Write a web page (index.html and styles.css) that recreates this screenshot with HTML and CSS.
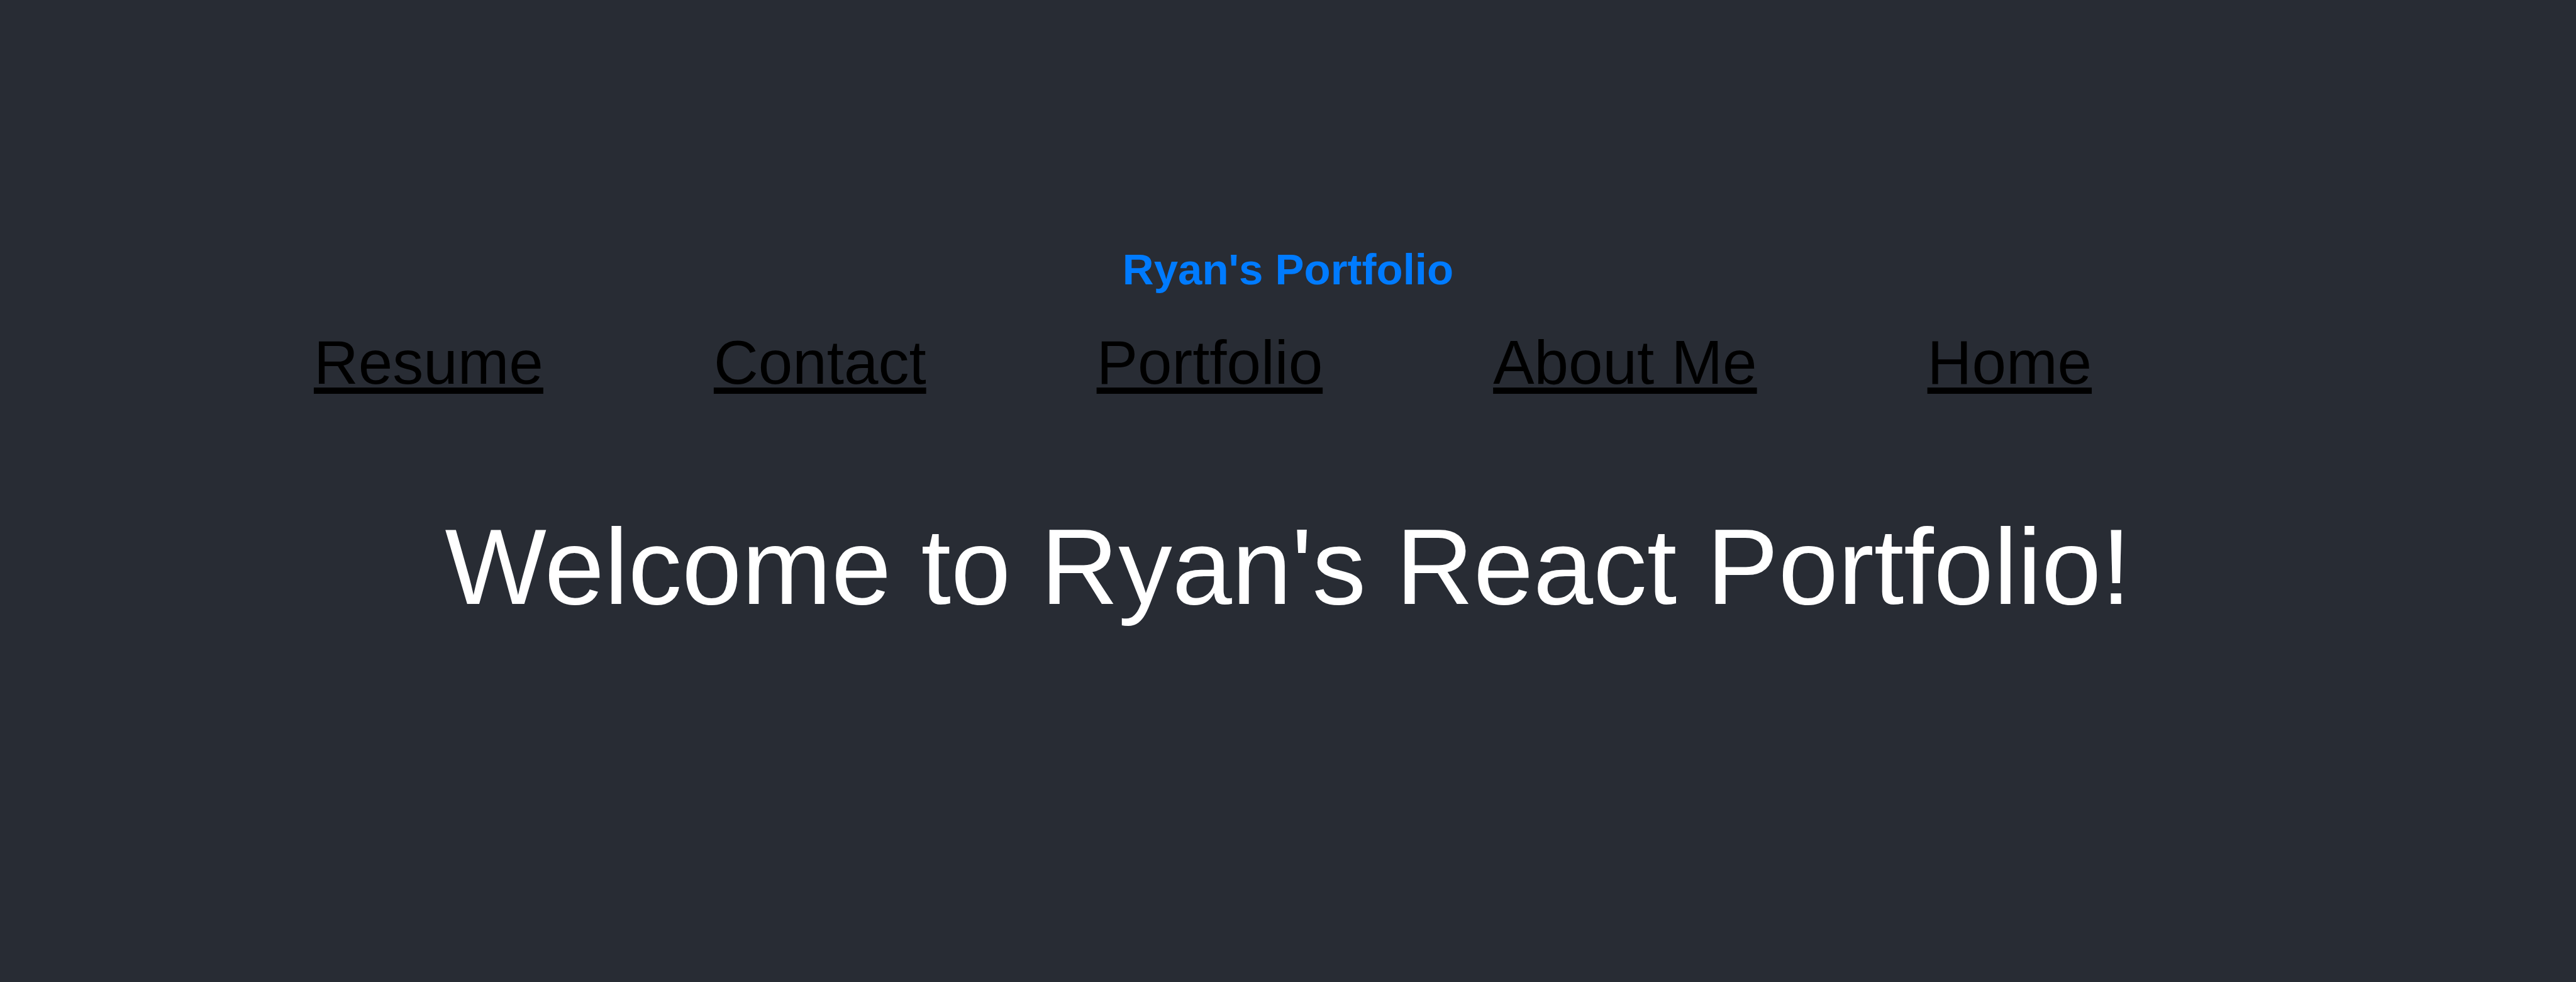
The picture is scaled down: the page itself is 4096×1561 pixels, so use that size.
FILE: index.html
```html
<!DOCTYPE html>
<html lang="en">
<head>
<meta charset="utf-8">
<title>Ryan's Portfolio</title>
<link rel="stylesheet" href="styles.css">
</head>
<body>
<div class="app">
  <header class="site-header">
    <h1 class="brand">Ryan's Portfolio</h1>
    <nav>
      <ul class="nav-list">
        <li><a class="nav-link" href="#resume">Resume</a></li>
        <li><a class="nav-link" href="#contact">Contact</a></li>
        <li><a class="nav-link" href="#portfolio">Portfolio</a></li>
        <li><a class="nav-link" href="#about">About Me</a></li>
        <li><a class="nav-link" href="#home">Home</a></li>
      </ul>
    </nav>
  </header>
  <main>
    <p class="welcome">Welcome to Ryan's React Portfolio!</p>
  </main>
</div>
</body>
</html>
```
FILE: styles.css
```css
* {
  box-sizing: border-box;
}

body {
  margin: 0;
  background: #282c34;
  color: #fff;
  font-family: Arial, "Liberation Sans", sans-serif;
}

.app {
  min-height: 100vh;
  padding-top: 389px;
  text-align: center;
}

.brand {
  margin: 0;
  color: #007bff;
  font-size: 69px;
  line-height: 80px;
}

.nav-list {
  display: flex;
  flex-wrap: wrap;
  justify-content: center;
  margin: 47px 0 0;
  padding: 0;
  list-style: none;
}

.nav-list li {
  margin-right: 271px;
}

.nav-link {
  color: #000;
  font-size: 98px;
  line-height: 120px;
  text-decoration-line: underline;
  text-decoration-thickness: 10px;
  text-underline-offset: 6px;
}

.welcome {
  margin: 165px 0 0;
  font-size: 171px;
  line-height: 200px;
}
```
